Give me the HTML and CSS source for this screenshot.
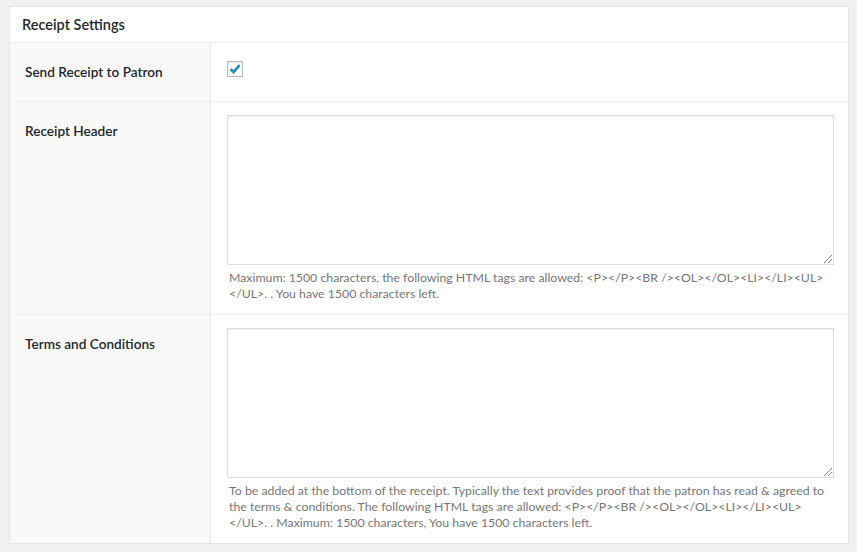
FILE: index.html
```html
<!DOCTYPE html>
<html>
<head>
<meta charset="utf-8">
<link rel="stylesheet" href="styles.css">
</head>
<body>
<div class="postbox">
  <h2 class="hndle">Receipt Settings</h2>
  <div class="row row-check">
    <div class="th">Send Receipt to Patron</div>
    <div class="td">
      <span class="checkbox">
        <svg width="14" height="14" viewBox="0 0 14 14"><path d="M2.6 7.2 L5.6 10.2 L11.6 3.2" fill="none" stroke="#1e8cbe" stroke-width="2.6" stroke-linecap="butt" stroke-linejoin="miter"/></svg>
      </span>
    </div>
  </div>
  <div class="row">
    <div class="th">Receipt Header</div>
    <div class="td">
      <div class="textarea"><span class="grip"></span></div>
      <p class="desc">Maximum: 1500 characters, the following HTML tags are allowed: &lt;P&gt;&lt;/P&gt;&lt;BR /&gt;&lt;OL&gt;&lt;/OL&gt;&lt;LI&gt;&lt;/LI&gt;&lt;UL&gt;&lt;/UL&gt;. . You have 1500 characters left.</p>
    </div>
  </div>
  <div class="row row-last">
    <div class="th">Terms and Conditions</div>
    <div class="td">
      <div class="textarea"><span class="grip"></span></div>
      <p class="desc">To be added at the bottom of the receipt. Typically the text provides proof that the patron has read &amp; agreed to the terms &amp; conditions. The following HTML tags are allowed: &lt;P&gt;&lt;/P&gt;&lt;BR /&gt;&lt;OL&gt;&lt;/OL&gt;&lt;LI&gt;&lt;/LI&gt;&lt;UL&gt;&lt;/UL&gt;. . Maximum: 1500 characters, You have 1500 characters left.</p>
    </div>
  </div>
</div>
</body>
</html>
```

FILE: styles.css
```css
html, body {
  margin: 0;
  padding: 0;
  background: #f1f1f1;
}
body {
  padding: 6px 8px 0 9px;
  font-family: Lato, "Noto Sans", sans-serif;
  color: #23282d;
}
.postbox {
  width: 838px;
  background: #fff;
  border: 1px solid #e5e5e5;
  box-shadow: 0 1px 1px rgba(0,0,0,0.04);
}
.hndle {
  margin: 0;
  height: 36px;
  box-sizing: border-box;
  padding: 8px 12px 0 12px;
  font-size: 14.5px;
  font-weight: 600;
  line-height: 19px;
  border-bottom: 1px solid #eee;
}
.row {
  display: flex;
  border-bottom: 1px solid #f1f1f1;
}
.row-last {
  border-bottom: none;
}
.th {
  width: 201px;
  flex: none;
  background: #f9f9f9;
  border-right: 1px solid #e9e9e9;
  box-sizing: border-box;
  padding: 19px 10px 10px 15px;
  font-size: 13.6px;
  font-weight: 600;
  line-height: 20px;
}
.td {
  flex: 1;
  padding: 13px 14px 12px 16px;
}
.row-check {
  height: 58px;
}
.row-check .td {
  padding-top: 18px;
  padding-bottom: 0;
}
.checkbox {
  display: flex;
  align-items: center;
  justify-content: center;
  width: 14px;
  height: 14px;
  border: 1px solid #b4b9be;
  background: #fff;
  box-shadow: inset 0 1px 2px rgba(0,0,0,0.1);
}
.textarea {
  position: relative;
  height: 148px;
  border: 1px solid #ddd;
  box-shadow: inset 0 1px 2px rgba(0,0,0,0.07);
  background: #fff;
}
.grip {
  position: absolute;
  right: 1px;
  bottom: 1px;
  width: 8px;
  height: 8px;
  background: linear-gradient(135deg, transparent 45%, #888 45%, #888 52%, transparent 52%, transparent 72%, #888 72%, #888 80%, transparent 80%);
}
.desc {
  margin: 5px 0 0 2px;
  font-size: 12.3px;
  line-height: 16px;
  color: #777;
}
.row-last .td {
  padding-bottom: 12px;
}
```
